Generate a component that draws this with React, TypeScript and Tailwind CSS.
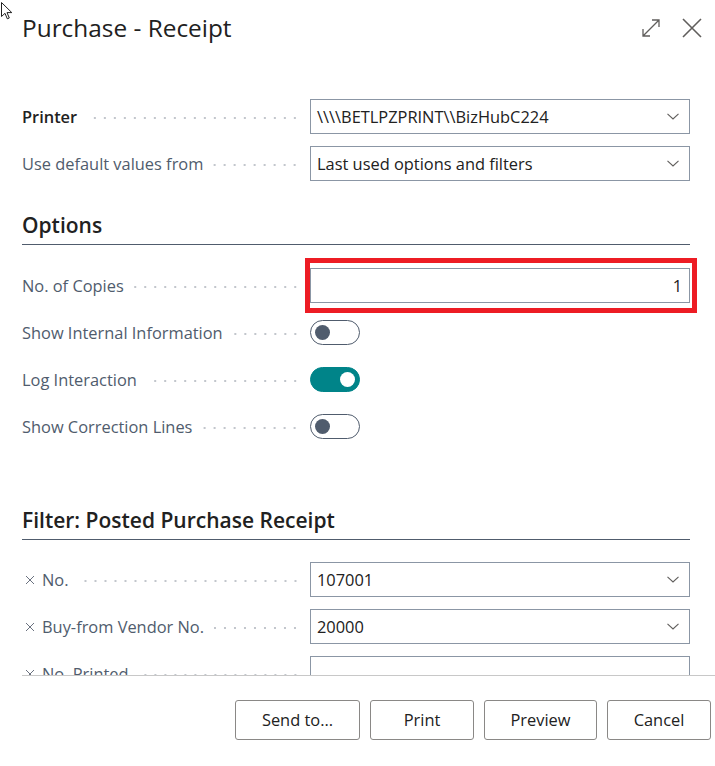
import React from "react";

const FONT = { fontFamily: '"Open Sans", "Noto Sans", Arial, sans-serif' };

function Dots() {
  return (
    <div className="flex-1 h-[4px] ml-[10px] translate-y-[2px] bg-[radial-gradient(circle,#c2c6cc_0.9px,transparent_1.4px)] bg-[length:10px_4px] bg-repeat-x bg-right" />
  );
}

function XMark() {
  return (
    <svg width="10" height="10" viewBox="0 0 10 10" className="mr-[7px] ml-[3px] shrink-0 translate-y-[1px]">
      <path d="M1 1 L9 9 M9 1 L1 9" stroke="#6b7280" strokeWidth="1" fill="none" />
    </svg>
  );
}

function Chevron() {
  return (
    <svg width="12" height="7" viewBox="0 0 12 7" className="shrink-0">
      <path d="M0.5 0.8 L6 6 L11.5 0.8" stroke="#605e5c" strokeWidth="1.1" fill="none" />
    </svg>
  );
}

function Row({
  label,
  bold,
  x,
  children,
}: {
  label: string;
  bold?: boolean;
  x?: boolean;
  children: React.ReactNode;
}) {
  return (
    <div className="flex h-[35px] items-center">
      <div className="flex w-[278px] items-center">
        {x && <XMark />}
        <span
          className={
            "whitespace-nowrap text-[16.4px] translate-y-[1px] " +
            (bold ? "font-semibold text-[#212121]" : "text-[#505c6d]")
          }
        >
          {label}
        </span>
        <Dots />
      </div>
      <div className="ml-[10px] w-[380px] h-full">{children}</div>
    </div>
  );
}

function Select({ value }: { value: string }) {
  return (
    <div className="h-full border border-[#8b96a5] flex items-center justify-between pl-[6px] pr-[10px]">
      <span className="text-[16.4px] text-[#212121] whitespace-nowrap translate-y-[1px]">{value}</span>
      <Chevron />
    </div>
  );
}

function Toggle({ on }: { on?: boolean }) {
  return (
    <div className="h-full flex items-center">
      <div
        className={
          "w-[50px] h-[25px] rounded-full border flex items-center px-[4px] " +
          (on
            ? "bg-[#008489] border-[#008489] justify-end"
            : "bg-white border-[#505c6d] justify-start")
        }
      >
        <div
          className={
            "w-[15px] h-[15px] rounded-full " + (on ? "bg-white" : "bg-[#505c6d]")
          }
        />
      </div>
    </div>
  );
}

function Heading({ text, mt }: { text: string; mt: string }) {
  return (
    <div
      className={
        mt +
        " h-[37px] flex items-center border-b border-[#505c6d] text-[21px] font-semibold text-[#212121]"
      }
    >
      {text}
    </div>
  );
}

function Button({ label, w }: { label: string; w: string }) {
  return (
    <button
      className={
        w +
        " h-[40px] border border-[#8a8886] rounded-[3px] bg-white text-[16.4px] text-[#212121]"
      }
    >
      {label}
    </button>
  );
}

export default function App() {
  return (
    <div
      className="relative w-[715px] h-[766px] bg-white flex flex-col overflow-hidden"
      style={FONT}
    >
      {/* mouse cursor */}
      <svg
        width="12"
        height="19"
        viewBox="0 0 12 19"
        className="absolute left-[1px] top-[2px]"
      >
        <path
          d="M0.5 0.5 L0.5 14.5 L4 11.3 L6.3 16.8 L8.3 16 L6 10.6 L10.8 10.6 Z"
          fill="white"
          stroke="#222"
          strokeWidth="1"
          strokeLinejoin="round"
        />
      </svg>

      {/* header */}
      <div className="h-[56px] shrink-0 flex items-center justify-between pl-[22px] pr-[13px]">
        <h1 className="text-[24.4px] text-[#212121] font-normal">Purchase - Receipt</h1>
        <div className="flex items-center gap-[21px]">
          <svg width="20" height="20" viewBox="0 0 20 20">
            <path
              d="M2 18 L18 2 M11 2 L18 2 L18 9 M2 11 L2 18 L9 18"
              stroke="#605e5c"
              strokeWidth="1.3"
              fill="none"
            />
          </svg>
          <svg width="20" height="20" viewBox="0 0 20 20">
            <path d="M1 1 L19 19 M19 1 L1 19" stroke="#605e5c" strokeWidth="1.6" fill="none" />
          </svg>
        </div>
      </div>

      {/* content */}
      <div className="flex-1 overflow-hidden pl-[22px] pr-[25px] pt-[43px]">
        <div className="flex flex-col gap-[12px]">
          <Row label="Printer" bold>
            <Select value="\\\\BETLPZPRINT\\BizHubC224" />
          </Row>
          <Row label="Use default values from">
            <Select value="Last used options and filters" />
          </Row>
        </div>

        <Heading text="Options" mt="mt-[27px]" />

        <div className="mt-[23px] flex flex-col gap-[12px]">
          <Row label="No. of Copies">
            <div className="relative h-full">
              <div className="h-full border border-[#8b96a5] flex items-center justify-end pr-[7px] text-[16.4px] text-[#212121]">
                <span className="translate-y-[1px]">1</span>
              </div>
              <div className="absolute -left-[5px] -right-[7px] -top-[10px] -bottom-[10px] border-[5px] border-[#ed1c24]" />
            </div>
          </Row>
          <Row label="Show Internal Information">
            <Toggle />
          </Row>
          <Row label="Log Interaction">
            <Toggle on />
          </Row>
          <Row label="Show Correction Lines">
            <Toggle />
          </Row>
        </div>

        <Heading text="Filter: Posted Purchase Receipt" mt="mt-[59px]" />

        <div className="mt-[22px] flex flex-col gap-[12px]">
          <Row label="No." x>
            <Select value="107001" />
          </Row>
          <Row label="Buy-from Vendor No." x>
            <Select value="20000" />
          </Row>
          <Row label="No. Printed" x>
            <div className="h-full border border-[#8b96a5]" />
          </Row>
        </div>
      </div>

      {/* footer */}
      <div className="h-[91px] shrink-0 ml-[22px] border-t border-[#c8c8c8] flex justify-end items-start pt-[24px] pr-[4px] gap-[10px]">
        <Button label="Send to..." w="w-[125px]" />
        <Button label="Print" w="w-[104px]" />
        <Button label="Preview" w="w-[113px]" />
        <Button label="Cancel" w="w-[104px]" />
      </div>
    </div>
  );
}
